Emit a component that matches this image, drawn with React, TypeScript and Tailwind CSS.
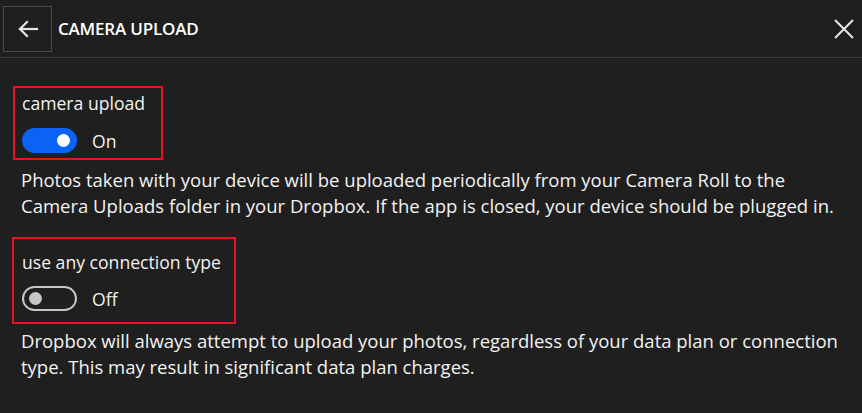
import React from "react";

function Toggle({ on }: { on: boolean }) {
  if (on) {
    return (
      <div className="w-[55px] h-[25px] rounded-full bg-[#0a63f5] flex items-center justify-end pr-[7px]">
        <div className="w-[13px] h-[13px] rounded-full bg-white" />
      </div>
    );
  }
  return (
    <div className="w-[55px] h-[25px] rounded-full border-2 border-[#c6c6c6] flex items-center pl-[5px]">
      <div className="w-[13px] h-[13px] rounded-full bg-[#c6c6c6]" />
    </div>
  );
}

export default function App() {
  return (
    <div
      className="w-[862px] h-[413px] bg-[#1f1f1f] text-[#f2f2f2] overflow-hidden"
      style={{ fontFamily: '"Open Sans", "Noto Sans", sans-serif' }}
    >
      <div className="h-[58px] border-b border-[#3a3a3a] flex items-center relative">
        <div className="ml-[3px] w-[49px] h-[46px] border border-[#4a4a4a] flex items-center justify-center">
          <svg width="22" height="18" viewBox="0 0 22 18" fill="none" stroke="#e6e6e6" strokeWidth="2.2" strokeLinecap="square">
            <path d="M20 9H3" />
            <path d="M10 2L3 9l7 7" />
          </svg>
        </div>
        <div className="ml-[6px] text-[17px] font-semibold tracking-[-0.2px] text-white">CAMERA UPLOAD</div>
        <div className="absolute right-[8px] top-[19px] w-[20px] h-[20px]">
          <svg width="20" height="20" viewBox="0 0 20 20" stroke="#e6e6e6" strokeWidth="2">
            <path d="M1 1L19 19M19 1L1 19" />
          </svg>
        </div>
      </div>

      <div className="pl-[13px] pt-[28px]">
        <div className="w-[150px] h-[74px] border-2 border-[#e81123] pl-[7px] pt-[3px]">
          <div className="text-[17.6px] leading-[24px]">camera upload</div>
          <div className="flex items-center mt-[13px]">
            <Toggle on />
            <span className="ml-[15px] text-[17.6px] leading-[24px]">On</span>
          </div>
        </div>
      </div>
      <div className="pl-[21px] pt-[7px] text-[18.5px] leading-[26px] whitespace-nowrap">
        Photos taken with your device will be uploaded periodically from your Camera Roll to the
        <br />
        Camera Uploads folder in your Dropbox. If the app is closed, your device should be plugged in.
      </div>

      <div className="pl-[12px] pt-[18px]">
        <div className="w-[224px] h-[87px] border-2 border-[#e81123] pl-[8px] pt-[11px]">
          <div className="text-[17.6px] leading-[24px]">use any connection type</div>
          <div className="flex items-center mt-[12px]">
            <Toggle on={false} />
            <span className="ml-[15px] text-[17.6px] leading-[24px]">Off</span>
          </div>
        </div>
      </div>
      <div className="pl-[21px] pt-[4px] text-[18.5px] leading-[26px] whitespace-nowrap">
        Dropbox will always attempt to upload your photos, regardless of your data plan or connection
        <br />
        type. This may result in significant data plan charges.
      </div>
    </div>
  );
}
